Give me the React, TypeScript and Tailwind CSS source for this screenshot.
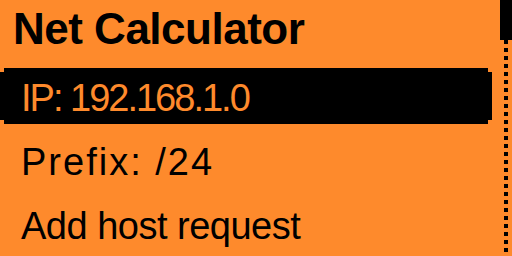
const items = [
  { label: 'IP: 192.168.1.0', selected: true, tracking: 'tracking-[-2px]' },
  { label: 'Prefix: /24', selected: false, tracking: 'tracking-[2px]' },
  { label: 'Add host request', selected: false, tracking: 'tracking-[-0.5px]' },
];

const notch =
  '[clip-path:polygon(4px_0,calc(100%_-_4px)_0,calc(100%_-_4px)_4px,100%_4px,100%_calc(100%_-_4px),calc(100%_-_4px)_calc(100%_-_4px),calc(100%_-_4px)_100%,4px_100%,4px_calc(100%_-_4px),0_calc(100%_-_4px),0_4px,4px_4px)]';

const Scrollbar = () => (
  <div className="flex w-3 flex-col items-center">
    <div className="h-10 w-3 shrink-0 bg-black" />
    <div className="flex flex-col gap-1">
      {[...Array(27)].map((_, i) => (
        <div key={i} className="h-1 w-1 bg-black" />
      ))}
    </div>
  </div>
);

export default function App() {
  return (
    <div className="flex h-[256px] w-[512px] overflow-hidden bg-[#fe8a2c] font-['Liberation_Sans',Arial,sans-serif]">
      <div className="flex w-[492px] flex-col">
        {/* Header */}
        <div className="h-[68px] shrink-0 pl-[13px] pt-[7px] text-[44px] font-bold leading-[44px] tracking-[-0.5px] text-black">
          Net Calculator
        </div>

        {/* Menu */}
        <div className="flex flex-col gap-2">
          {items.map((item) => (
            <div
              key={item.label}
              className={`h-[56px] whitespace-nowrap pl-[21px] pt-[4px] text-[38px] leading-[52px] ${item.tracking} ${
                item.selected ? `bg-black text-[#fe8a2c] ${notch}` : 'text-black'
              }`}
            >
              {item.label}
            </div>
          ))}
        </div>
      </div>
      <div className="ml-2">
        <Scrollbar />
      </div>
    </div>
  );
}
